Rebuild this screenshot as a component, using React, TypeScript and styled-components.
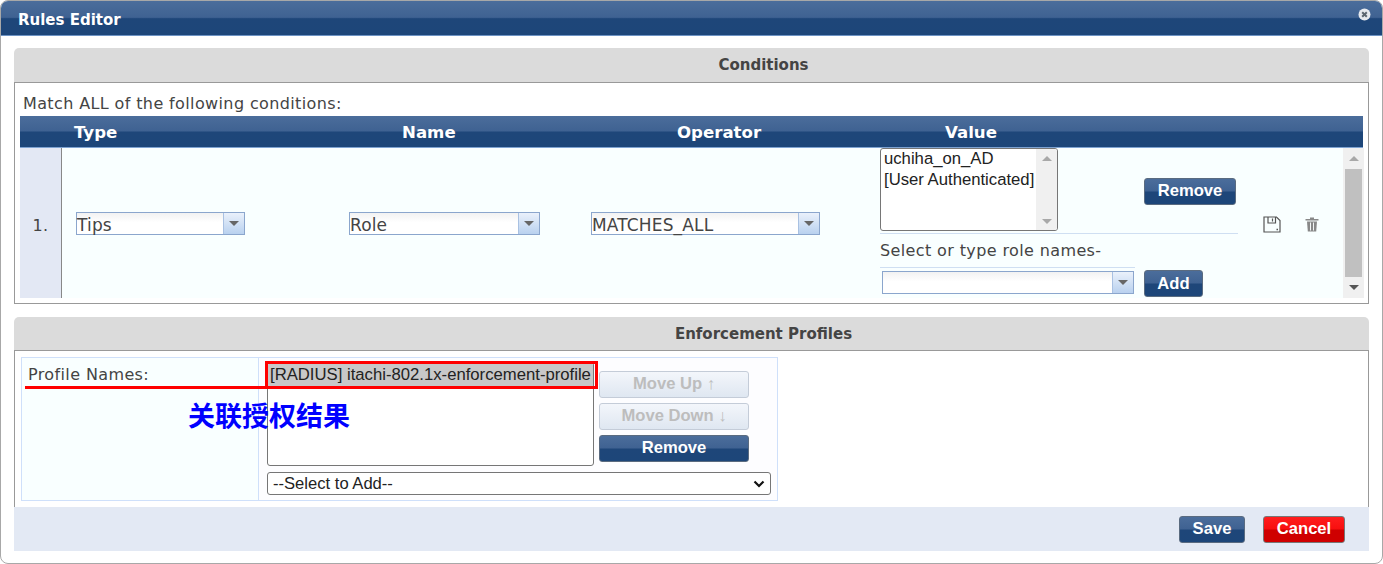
import React from 'react';
import styled, { createGlobalStyle, css } from 'styled-components';

const GlobalStyle = createGlobalStyle`
  html, body {
    margin: 0;
    padding: 0;
    background: #fff;
    overflow: hidden;
  }
  * { box-sizing: border-box; }
`;

const barGradient = css`
  background: linear-gradient(to bottom, #4b6d9b 0%, #3f6292 48%, #1e4679 52%, #1d4679 100%);
`;

const bodyText = css`
  font-size: 16px;
  letter-spacing: 0.38px;
`;

const chevron = encodeURIComponent(`
  <svg xmlns="http://www.w3.org/2000/svg" width="12" height="8" viewBox="0 0 12 8">
    <path d="M1.5 1.5L6 6L10.5 1.5" fill="none" stroke="#111" stroke-width="2.2"/>
  </svg>
`);

const Dialog = styled.div`
  position: relative;
  width: 1383px;
  height: 564px;
  background: #fff;
  border: 1px solid #a8a8a8;
  border-radius: 8px;
  overflow: hidden;
  font-family: 'DejaVu Sans', Verdana, sans-serif;
  color: #444;
`;

const TitleBar = styled.div`
  ${barGradient}
  height: 35px;
  padding-left: 17px;
  display: flex;
  align-items: center;
  border-bottom: 1px solid #6d93c4;
  color: #fff;
  font-size: 15px;
  font-weight: bold;
  padding-top: 3px;
`;

const CloseIcon = styled.svg`
  position: absolute;
  top: 7px;
  right: 11px;
`;

const Content = styled.div`
  padding: 12px 13px 0;
`;

const SectionHead = styled.div<{ $height: number }>`
  height: ${({ $height }) => $height}px;
  background: #dbdbdb;
  border-radius: 5px 5px 0 0;
  display: flex;
  align-items: center;
  justify-content: center;
  padding-left: 144px;
  font-size: 15px;
  font-weight: bold;
  color: #444;
`;

const ConditionsBody = styled.div`
  height: 222px;
  border: 1px solid #999;
  padding: 0 5px;
`;

const MatchText = styled.div`
  ${bodyText}
  height: 33px;
  padding: 11px 0 0 3px;
  line-height: 19px;
`;

const HeadRow = styled.div`
  ${barGradient}
  height: 32px;
  display: grid;
  grid-template-columns: 328px 275px 268px 1fr;
  padding: 2px 0 0 54px;
  align-items: center;
  color: #fff;
  font-size: 16.6px;
  font-weight: bold;
  border-bottom: 1px solid #7ea3d2;
`;

const RuleRow = styled.div`
  height: 150px;
  display: grid;
  grid-template-columns: 42px 287px 242px 289px 363px 100px 21px;
  background: #f9ffff;
`;

const NumberCell = styled.div`
  ${bodyText}
  background: #e3e8f4;
  border-right: 1px solid #888;
  display: flex;
  align-items: center;
  justify-content: center;
  padding-top: 5px;
`;

const SelectCell = styled.div<{ $pad?: number }>`
  display: flex;
  align-items: center;
  padding-left: ${({ $pad }) => $pad ?? 0}px;
  padding-top: 1px;
`;

const Combo = styled.div<{ $width: number }>`
  width: ${({ $width }) => $width}px;
  height: 23px;
  border: 1px solid #8ba6cd;
  display: flex;
  background: linear-gradient(to bottom, #f2f2f2 0%, #fff 45%);
  font-size: 17px;
  letter-spacing: 0.15px;
  line-height: 24px;
  color: #444;
`;

const ComboText = styled.div`
  flex: 1;
  white-space: nowrap;
`;

const ComboArrow = styled.div`
  width: 21px;
  background: linear-gradient(to bottom, #eaf1fb 0%, #b9d1ef 100%);
  border-left: 1px solid #a9c1e2;
  display: flex;
  align-items: center;
  justify-content: center;
`;

const Triangle = styled.div<{ $up?: boolean; $color: string }>`
  width: 0;
  height: 0;
  border-left: 5px solid transparent;
  border-right: 5px solid transparent;
  ${({ $up, $color }) =>
    $up ? `border-bottom: 5px solid ${$color};` : `border-top: 5px solid ${$color};`}
`;

const ValueCell = styled.div`
  display: flex;
  flex-direction: column;
`;

const ValueTop = styled.div`
  display: flex;
  width: 358px;
  height: 86px;
  padding-bottom: 2px;
  border-bottom: 1px solid #cfdff2;
`;

const ListBox = styled.div<{ $width: number; $height: number }>`
  width: ${({ $width }) => $width}px;
  height: ${({ $height }) => $height}px;
  border: 1px solid #767676;
  border-radius: 3px;
  background: #fff;
  display: flex;
  font-family: 'Liberation Sans', Arial, sans-serif;
  font-size: 16.7px;
  color: #222;
  overflow: hidden;
`;

const ListItems = styled.div`
  flex: 1;
  padding: 0 0 0 3px;
  line-height: 20.5px;
  white-space: nowrap;
`;

const ListScroll = styled.div`
  width: 21px;
  background: #f0f0f0;
  display: flex;
  flex-direction: column;
  justify-content: space-between;
  align-items: center;
  padding: 7px 0 6px;
`;

const RoleLabel = styled.div`
  ${bodyText}
  width: 255px;
  height: 34px;
  line-height: 33px;
  border-bottom: 1px solid #cfdff2;
  white-space: nowrap;
`;

const AddRow = styled.div`
  display: flex;
  align-items: flex-start;
  padding-left: 2px;
  margin-top: 3px;
`;

const RowButton = styled.button<{ $variant?: 'primary' | 'danger' | 'disabled'; $width: number }>`
  width: ${({ $width }) => $width}px;
  height: 27px;
  padding: 0 0 2px;
  border-radius: 3px;
  font-family: 'Liberation Sans', Arial, sans-serif;
  font-size: 16.6px;
  font-weight: bold;
  cursor: pointer;
  ${({ $variant }) => {
    if ($variant === 'disabled') {
      return `
        background: linear-gradient(to bottom, #f3f6fb, #dfe7f1);
        border: 1px solid #c4ccd8;
        color: #bdbdbd;
      `;
    }
    if ($variant === 'danger') {
      return `
        background: linear-gradient(to bottom, #ff1d1d 0%, #f80f0f 48%, #cf0000 52%, #cf0000 100%);
        border: 1px solid #777;
        color: #fff;
      `;
    }
    return `
      background: linear-gradient(to bottom, #4b6d9b 0%, #3f6292 48%, #1e4679 52%, #1d4679 100%);
      border: 1px solid #5a6b80;
      color: #fff;
    `;
  }}
`;

const TopRemove = styled(RowButton)`
  margin: 30px 0 0 86px;
`;

const AddButton = styled(RowButton)`
  margin: -1px 0 0 10px;
  padding-bottom: 0;
`;

const ActionCell = styled.div`
  display: flex;
  align-items: center;
  gap: 24px;
  padding: 2px 0 0 20px;
`;

const RowScroll = styled.div`
  background: #f0f0f0;
  display: flex;
  flex-direction: column;
  align-items: center;
`;

const ScrollEnd = styled.div`
  height: 21px;
  display: flex;
  align-items: center;
  justify-content: center;
`;

const ScrollThumb = styled.div`
  width: 17px;
  height: 108px;
  background: #c0c0c0;
`;

const ScrollGap = styled.div`
  flex: 1;
`;

const SectionGap = styled.div`
  height: 13px;
`;

const ProfilesBody = styled.div`
  height: 157px;
  border: 1px solid #999;
  border-bottom: none;
  padding: 6px;
`;

const ProfilesTable = styled.div`
  width: 757px;
  height: 144px;
  border: 1px solid #cfe0fa;
  display: grid;
  grid-template-columns: 237px 1fr;
  background: #fdfdff;
`;

const ProfileLabel = styled.div`
  ${bodyText}
  background: #f9ffff;
  border-right: 1px solid #cfe0fa;
  padding: 7px 0 0 6px;
  line-height: 20px;
`;

const ProfileCell = styled.div`
  padding: 4px 0 0 8px;
`;

const ProfileTop = styled.div`
  display: flex;
  gap: 5px;
`;

const SelectedItem = styled.div`
  background: #c8c8c8;
  height: 23px;
  line-height: 22px;
  padding-left: 2px;
  margin-top: 1px;
  white-space: nowrap;
`;

const ProfileList = styled.div`
  flex: 1;
`;

const MoveButtons = styled.div`
  display: flex;
  flex-direction: column;
  gap: 5px;
  padding-top: 9px;
`;

const AddSelect = styled.select`
  display: block;
  width: 504px;
  height: 23px;
  margin-top: 6px;
  padding: 0 0 0 5px;
  border: 1px solid #767676;
  border-radius: 3px;
  appearance: none;
  background: #fff url("data:image/svg+xml,${chevron}") no-repeat right 5px center;
  color: #222;
  font-family: 'Liberation Sans', Arial, sans-serif;
  font-size: 16.6px;
`;

const Footer = styled.div`
  height: 44px;
  background: #e3e9f4;
  display: flex;
  justify-content: flex-end;
  align-items: flex-start;
  gap: 18px;
  padding: 9px 24px 0 0;
`;

const RedBox = styled.div`
  position: absolute;
  left: 264px;
  top: 360px;
  width: 333px;
  height: 28px;
  border: 3px solid #f00;
`;

const RedLine = styled.div`
  position: absolute;
  left: 24px;
  top: 385px;
  width: 241px;
  height: 3px;
  background: #f00;
`;

const BlueNote = styled.div`
  position: absolute;
  left: 187px;
  top: 397px;
  font-family: 'Noto Sans CJK SC', sans-serif;
  font-size: 27px;
  line-height: 34px;
  font-weight: 700;
  color: #00f;
  white-space: nowrap;
`;

const SaveIcon = () => (
  <svg width="18" height="17" viewBox="0 0 18 17" fill="none" stroke="#555" strokeWidth="1.2">
    <path d="M1 1H13.5L17 4.5V16H1Z" />
    <path d="M5 1V7H12.5V1M9.5 2.5V5.5" />
    <path d="M13.5 13.5h1.5" strokeWidth="1.5" />
  </svg>
);

const TrashIcon = () => (
  <svg width="14" height="15" viewBox="0 0 14 15" fill="#888">
    <path d="M5 0.5H9V2H13.5V3.5H0.5V2H5Z" />
    <path d="M2 4.5H12L11.2 14.5H2.8Z" />
    <path d="M5 5.5H6V13.5H5ZM8 5.5H9V13.5H8Z" fill="#f2f6f6" />
  </svg>
);

const ArrowGlyph = ({ up, color }: { up?: boolean; color: string }) => (
  <Triangle $up={up} $color={color} />
);

const SelectBox = ({ width, value }: { width: number; value: string }) => (
  <Combo $width={width}>
    <ComboText>{value}</ComboText>
    <ComboArrow>
      <ArrowGlyph color="#666" />
    </ComboArrow>
  </Combo>
);

export default function App() {
  return (
    <>
      <GlobalStyle />
      <Dialog>
        <TitleBar>Rules Editor</TitleBar>
        <CloseIcon width="13" height="13" viewBox="0 0 13 13">
          <circle cx="6.5" cy="6.5" r="6" fill="#e6e9ee" />
          <path d="M4.2 4.2L8.8 8.8M8.8 4.2L4.2 8.8" stroke="#5c6670" strokeWidth="2" />
        </CloseIcon>
        <Content>
          <SectionHead $height={34}>Conditions</SectionHead>
          <ConditionsBody>
            <MatchText>Match ALL of the following conditions:</MatchText>
            <HeadRow>
              <span>Type</span>
              <span>Name</span>
              <span>Operator</span>
              <span>Value</span>
            </HeadRow>
            <RuleRow>
              <NumberCell>1.</NumberCell>
              <SelectCell $pad={14}>
                <SelectBox width={169} value="Tips" />
              </SelectCell>
              <SelectCell>
                <SelectBox width={191} value="Role" />
              </SelectCell>
              <SelectCell>
                <SelectBox width={229} value="MATCHES_ALL" />
              </SelectCell>
              <ValueCell>
                <ValueTop>
                  <ListBox $width={178} $height={83}>
                    <ListItems>
                      <div>uchiha_on_AD</div>
                      <div>[User Authenticated]</div>
                    </ListItems>
                    <ListScroll>
                      <ArrowGlyph up color="#a8a8a8" />
                      <ArrowGlyph color="#a8a8a8" />
                    </ListScroll>
                  </ListBox>
                  <TopRemove $width={92}>Remove</TopRemove>
                </ValueTop>
                <RoleLabel>Select or type role names-</RoleLabel>
                <AddRow>
                  <SelectBox width={252} value="" />
                  <AddButton $width={59}>Add</AddButton>
                </AddRow>
              </ValueCell>
              <ActionCell>
                <SaveIcon />
                <TrashIcon />
              </ActionCell>
              <RowScroll>
                <ScrollEnd>
                  <ArrowGlyph up color="#a8a8a8" />
                </ScrollEnd>
                <ScrollThumb />
                <ScrollGap />
                <ScrollEnd>
                  <ArrowGlyph color="#555" />
                </ScrollEnd>
              </RowScroll>
            </RuleRow>
          </ConditionsBody>
          <SectionGap />
          <SectionHead $height={33}>Enforcement Profiles</SectionHead>
          <ProfilesBody>
            <ProfilesTable>
              <ProfileLabel>Profile Names:</ProfileLabel>
              <ProfileCell>
                <ProfileTop>
                  <ListBox $width={327} $height={104}>
                    <ProfileList>
                      <SelectedItem>[RADIUS] itachi-802.1x-enforcement-profile</SelectedItem>
                    </ProfileList>
                  </ListBox>
                  <MoveButtons>
                    <RowButton $width={150} $variant="disabled">Move Up ↑</RowButton>
                    <RowButton $width={150} $variant="disabled">Move Down ↓</RowButton>
                    <RowButton $width={150}>Remove</RowButton>
                  </MoveButtons>
                </ProfileTop>
                <AddSelect defaultValue="">
                  <option value="">--Select to Add--</option>
                </AddSelect>
              </ProfileCell>
            </ProfilesTable>
          </ProfilesBody>
          <Footer>
            <RowButton $width={66}>Save</RowButton>
            <RowButton $width={82} $variant="danger">Cancel</RowButton>
          </Footer>
        </Content>
        <RedBox />
        <RedLine />
        <BlueNote>关联授权结果</BlueNote>
      </Dialog>
    </>
  );
}
